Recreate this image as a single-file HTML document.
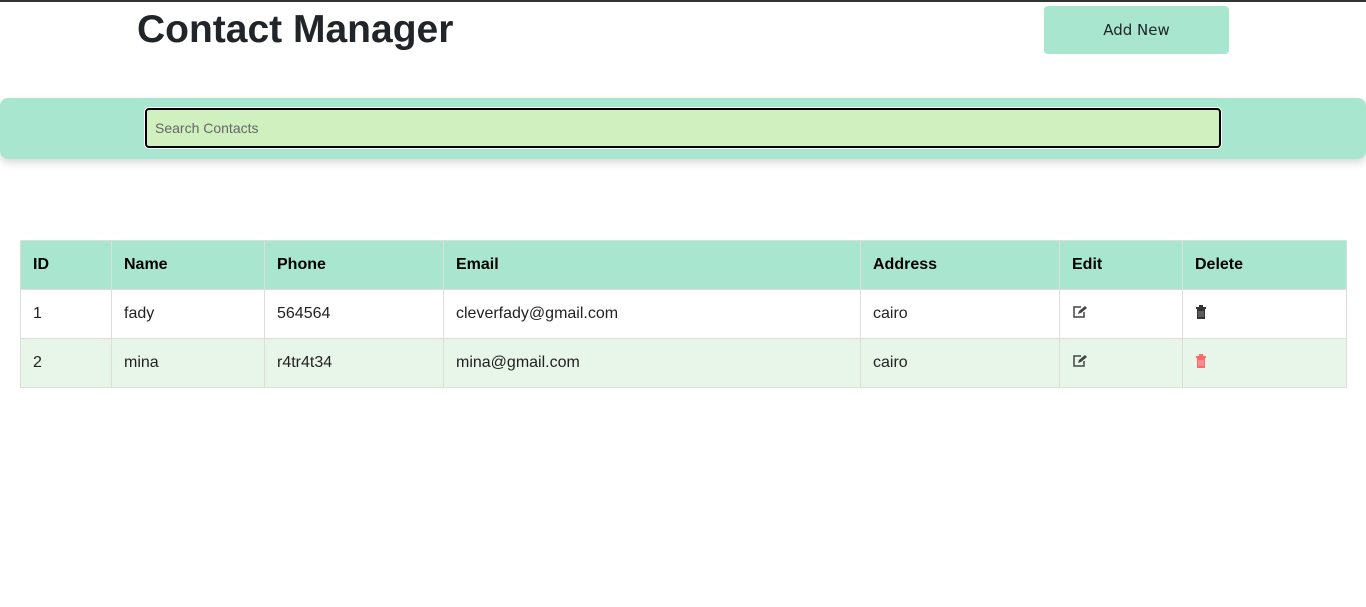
<!DOCTYPE html>
<html><head><style>
body{margin:0;width:1366px;height:607px;background:#fff;font-family:"Liberation Sans",sans-serif;border-top:2px solid #333;box-sizing:border-box;position:relative;overflow:hidden}
h1{position:absolute;left:137px;top:6px;margin:0;font-size:39px;font-weight:bold;color:#212529;font-family:"Liberation Sans",sans-serif;letter-spacing:0}
.btn{position:absolute;left:1044px;top:4px;width:185px;height:48px;background:#a8e6cf;border-radius:4px;font-size:15px;color:#212529;display:flex;align-items:center;justify-content:center;font-family:"DejaVu Sans",sans-serif}
.bar{position:absolute;left:0;top:96px;width:1366px;height:61px;background:#a8e6cf;border-radius:8px;box-shadow:0 4px 8px rgba(0,0,0,.15)}
.inp{position:absolute;left:145px;top:10px;height:36px;background:#d0f0c0;border:2px solid #000;border-radius:4px;box-shadow:0 0 0 1px #fff;font-size:14px;color:#666;line-height:36px;padding-left:8px;width:1064px}
table{position:absolute;left:20px;top:238px;width:1326px;border-collapse:collapse;table-layout:fixed;font-size:16px;color:#222;font-family:"Liberation Sans",sans-serif}
td,th{border:1px solid #ddd;height:48px;padding:0 12px;text-align:left}
th{background:#a8e6cf;font-weight:bold;color:#000}
tr.g td{background:#e8f5e9}
</style></head><body>
<h1>Contact Manager</h1>
<div class="btn">Add New</div>
<div class="bar"><div class="inp">Search Contacts</div></div>
<table>
<colgroup><col style="width:91px"><col style="width:153px"><col style="width:179px"><col style="width:417px"><col style="width:199px"><col style="width:123px"><col style="width:164px"></colgroup>
<tr><th>ID</th><th>Name</th><th>Phone</th><th>Email</th><th>Address</th><th>Edit</th><th>Delete</th></tr>
<tr><td>1</td><td>fady</td><td>564564</td><td>cleverfady@gmail.com</td><td>cairo</td>
<td><svg width="16" height="14" viewBox="0 0 16 14"><path d="M9 2H2v10h10V7" fill="none" stroke="#444" stroke-width="1.5"/><path d="M6 9l1-3 6-5 2 2-6 5z" fill="#444"/></svg></td>
<td><svg width="12" height="14" viewBox="0 0 12 14"><path d="M1 2h10v2H1zM4 0h4v2H4zM2 4h8v10H2z" fill="#333"/><path d="M4 6v6M6 6v6M8 6v6" stroke="#999" stroke-width=".8"/></svg></td></tr>
<tr class="g"><td>2</td><td>mina</td><td>r4tr4t34</td><td>mina@gmail.com</td><td>cairo</td>
<td><svg width="16" height="14" viewBox="0 0 16 14"><path d="M9 2H2v10h10V7" fill="none" stroke="#444" stroke-width="1.5"/><path d="M6 9l1-3 6-5 2 2-6 5z" fill="#444"/></svg></td>
<td><svg width="12" height="14" viewBox="0 0 12 14"><path d="M1 2h10v2H1zM4 0h4v2H4zM2 4h8v10H2z" fill="#ff6b6b"/><path d="M4 6v6M6 6v6M8 6v6" stroke="#fbb" stroke-width=".8"/></svg></td></tr>
</table>
</body></html>
